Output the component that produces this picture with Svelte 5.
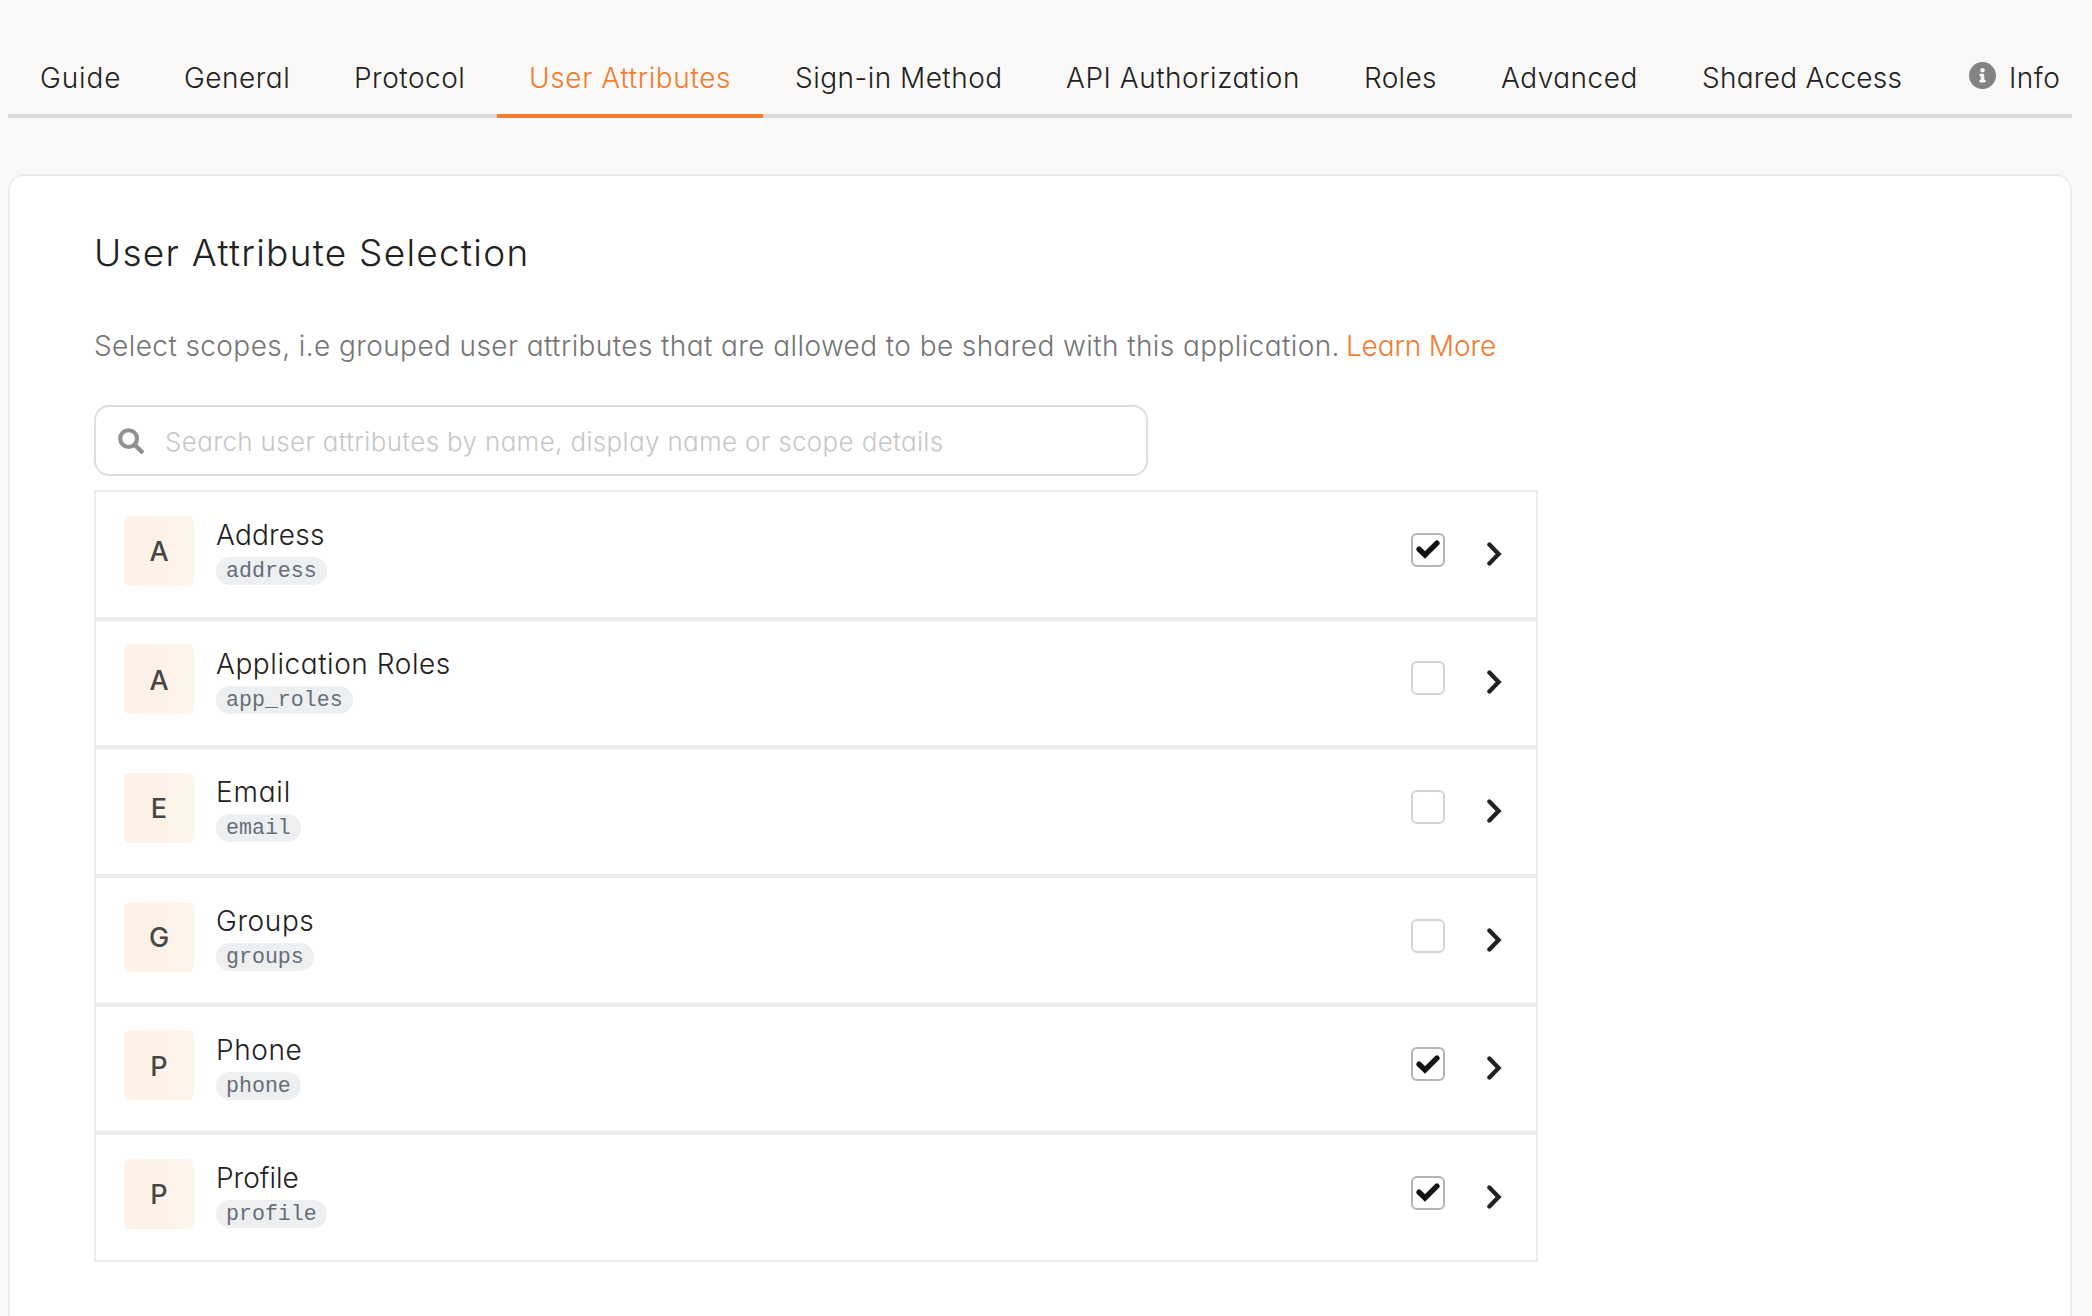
<script>
  const tabs = [
    { label: 'Guide', ls: 0.9 },
    { label: 'General', ls: 0.5 },
    { label: 'Protocol', ls: 0.5 },
    { label: 'User Attributes', ls: 0.62, active: true },
    { label: 'Sign-in Method', ls: 0.48 },
    { label: 'API Authorization', ls: 0.53 },
    { label: 'Roles', ls: 0.3 },
    { label: 'Advanced', ls: 0.5 },
    { label: 'Shared Access', ls: 0.27 },
    { label: 'Info', ls: 0.5, icon: true }
  ];

  let scopes = $state([
    { name: 'Address', scope: 'address', ls: 0.2, checked: true },
    { name: 'Application Roles', scope: 'app_roles', ls: 0.57, checked: false },
    { name: 'Email', scope: 'email', ls: 0.8, checked: false },
    { name: 'Groups', scope: 'groups', ls: 0.6, checked: false },
    { name: 'Phone', scope: 'phone', ls: 0.6, checked: true },
    { name: 'Profile', scope: 'profile', ls: 0, checked: true }
  ]);
</script>

<div class="page">
  <nav class="tabs">
    {#each tabs as tab}
      <a class="tab" class:active={tab.active} class:info={tab.icon} href="#top">
        {#if tab.icon}
          <svg class="info-icon" viewBox="8 8 496 496" aria-hidden="true">
            <path fill="currentColor" d="M256 8C119.043 8 8 119.083 8 256c0 136.997 111.043 248 248 248s248-111.003 248-248C504 119.083 392.957 8 256 8zm0 110c23.196 0 42 18.804 42 42s-18.804 42-42 42-42-18.804-42-42 18.804-42 42-42zm56 254c0 6.627-5.373 12-12 12h-88c-6.627 0-12-5.373-12-12v-24c0-6.627 5.373-12 12-12h12v-64h-12c-6.627 0-12-5.373-12-12v-24c0-6.627 5.373-12 12-12h64c6.627 0 12 5.373 12 12v100h12c6.627 0 12 5.373 12 12v24z" />
          </svg>
        {/if}
        <span style:letter-spacing="{tab.ls}px">{tab.label}</span>
      </a>
    {/each}
  </nav>

  <main class="card">
    <h1>User Attribute Selection</h1>
    <p class="description">
      <span>Select scopes, i.e grouped user attributes that are allowed to be shared with this application.</span>
      <a href="#learn">Learn More</a>
    </p>

    <label class="search">
      <svg viewBox="0 0 26 26" aria-hidden="true">
        <circle cx="10.6" cy="10.6" r="8.4" fill="none" stroke="currentColor" stroke-width="4.1" />
        <path d="M17.2 17.2 L23.6 23.6" fill="none" stroke="currentColor" stroke-width="4.4" stroke-linecap="round" />
      </svg>
      <input type="text" placeholder="Search user attributes by name, display name or scope details" />
    </label>

    <ul class="list">
      {#each scopes as item}
        <li class="row">
          <div class="avatar">{item.name[0]}</div>
          <div class="text">
            <div class="name" style:letter-spacing="{item.ls}px">{item.name}</div>
            <code>{item.scope}</code>
          </div>
          <button class="check" class:checked={item.checked} aria-label={item.name} onclick={() => (item.checked = !item.checked)}>
            {#if item.checked}
              <svg viewBox="0 0 24 19" aria-hidden="true">
                <path d="M3.1 9.2 L9 15 L20.9 3.2" fill="none" stroke="#111" stroke-width="5.4" stroke-linecap="round" />
              </svg>
            {/if}
          </button>
          <svg class="chevron" viewBox="0 0 15 24" aria-hidden="true">
            <path d="M2.4 2.5 L11.6 12 L2.4 21.5" fill="none" stroke="#212121" stroke-width="4.3" stroke-linecap="round" />
          </svg>
        </li>
      {/each}
    </ul>
  </main>
</div>

<style>
  :global(body) {
    background: #faf9f7;
    overflow: hidden;
  }

  .page {
    box-sizing: border-box;
    height: 1316px;
    padding: 60px 20px 0 8px;
    display: flex;
    flex-direction: column;
    font-family: Inter, 'Liberation Sans', sans-serif;
    font-weight: 350;
    font-size: 28px;
    line-height: 34px;
    font-feature-settings: 'cv11';
    color: #212121;
    overflow: hidden;
  }

  a {
    color: inherit;
    text-decoration: none;
  }

  .tabs {
    flex: none;
    display: grid;
    grid-template-columns: 144px 170px 175px 266px 271px 298px 137px 201px 265px 137px;
    height: 58px;
  }

  .tab {
    display: flex;
    box-sizing: border-box;
    padding-left: 32px;
    border-bottom: 4px solid #d9d9d9;
    white-space: nowrap;
  }

  .tab span {
    padding-top: 1px;
  }

  .tab.active {
    color: #f27c30;
    border-color: #f27c30;
  }

  .tab.info {
    padding-left: 34px;
    gap: 13px;
  }

  .info-icon {
    width: 27px;
    height: 27px;
    margin-top: 2px;
    color: #838383;
  }

  .card {
    flex: 1;
    margin-top: 56px;
    padding: 55px 84px 0;
    background: #fff;
    border: 2px solid #ececec;
    border-bottom: 0;
    border-radius: 16px 16px 0 0;
  }

  h1 {
    margin: 0;
    font-size: 37px;
    line-height: 44px;
    font-weight: 350;
    letter-spacing: 1.27px;
    white-space: nowrap;
  }

  .description {
    display: flex;
    gap: 6px;
    margin: 54px 0 0;
    color: #757575;
    white-space: nowrap;
    letter-spacing: 0.41px;
  }

  .description a {
    color: #f27c30;
    letter-spacing: -0.1px;
  }

  .search {
    box-sizing: border-box;
    display: flex;
    align-items: center;
    gap: 21px;
    width: 1054px;
    height: 71px;
    margin-top: 42px;
    padding: 0 22px;
    border: 2px solid #dedede;
    border-radius: 15px;
  }

  .search svg {
    flex: none;
    width: 26px;
    height: 26px;
    color: #909090;
  }

  .search input {
    flex: 1;
    min-width: 0;
    height: 34px;
    margin-top: 2px;
    padding: 0;
    border: 0;
    outline: 0;
    background: none;
    font: inherit;
    font-size: 26px;
    font-feature-settings: inherit;
    letter-spacing: 0.34px;
    color: #212121;
  }

  .search input::placeholder {
    color: #c7c7c7;
    opacity: 1;
  }

  .list {
    box-sizing: border-box;
    width: 1444px;
    margin: 14px 0 0;
    padding: 0;
    list-style: none;
  }

  .row {
    box-sizing: border-box;
    display: flex;
    align-items: flex-start;
    height: 128.667px;
    padding: 23.6px 34px 0 28px;
    border: 2px solid #ececec;
  }

  .avatar {
    flex: none;
    display: flex;
    align-items: center;
    justify-content: center;
    box-sizing: border-box;
    width: 70px;
    height: 70px;
    padding-top: 3px;
    border-radius: 6px;
    background: linear-gradient(90deg, #fdf1e8, #fdf2e8 55%, #fef6ea);
    color: #474747;
    font-size: 27px;
    font-weight: 520;
  }

  .text {
    flex: 1;
    display: flex;
    flex-direction: column;
    align-items: flex-start;
    gap: 5px;
    margin-left: 22px;
    padding-top: 2.4px;
  }

  code {
    padding: 1px 10px 0;
    border-radius: 14px;
    background: #eeeff1;
    color: #656e77;
    font-family: 'Liberation Mono', monospace;
    font-weight: 400;
    font-size: 21.6px;
    line-height: 27px;
  }

  .check {
    flex: none;
    display: flex;
    align-items: center;
    justify-content: center;
    box-sizing: border-box;
    width: 34px;
    height: 34px;
    margin-top: 17px;
    padding: 0;
    background: #fff;
    border: 2px solid #d4d4d5;
    border-radius: 6px;
  }

  .check.checked {
    border-color: #b3b3b3;
  }

  .check svg {
    width: 24px;
    height: 19px;
  }

  .chevron {
    flex: none;
    width: 15px;
    height: 24px;
    margin: 26px 0 0 42px;
  }
</style>
